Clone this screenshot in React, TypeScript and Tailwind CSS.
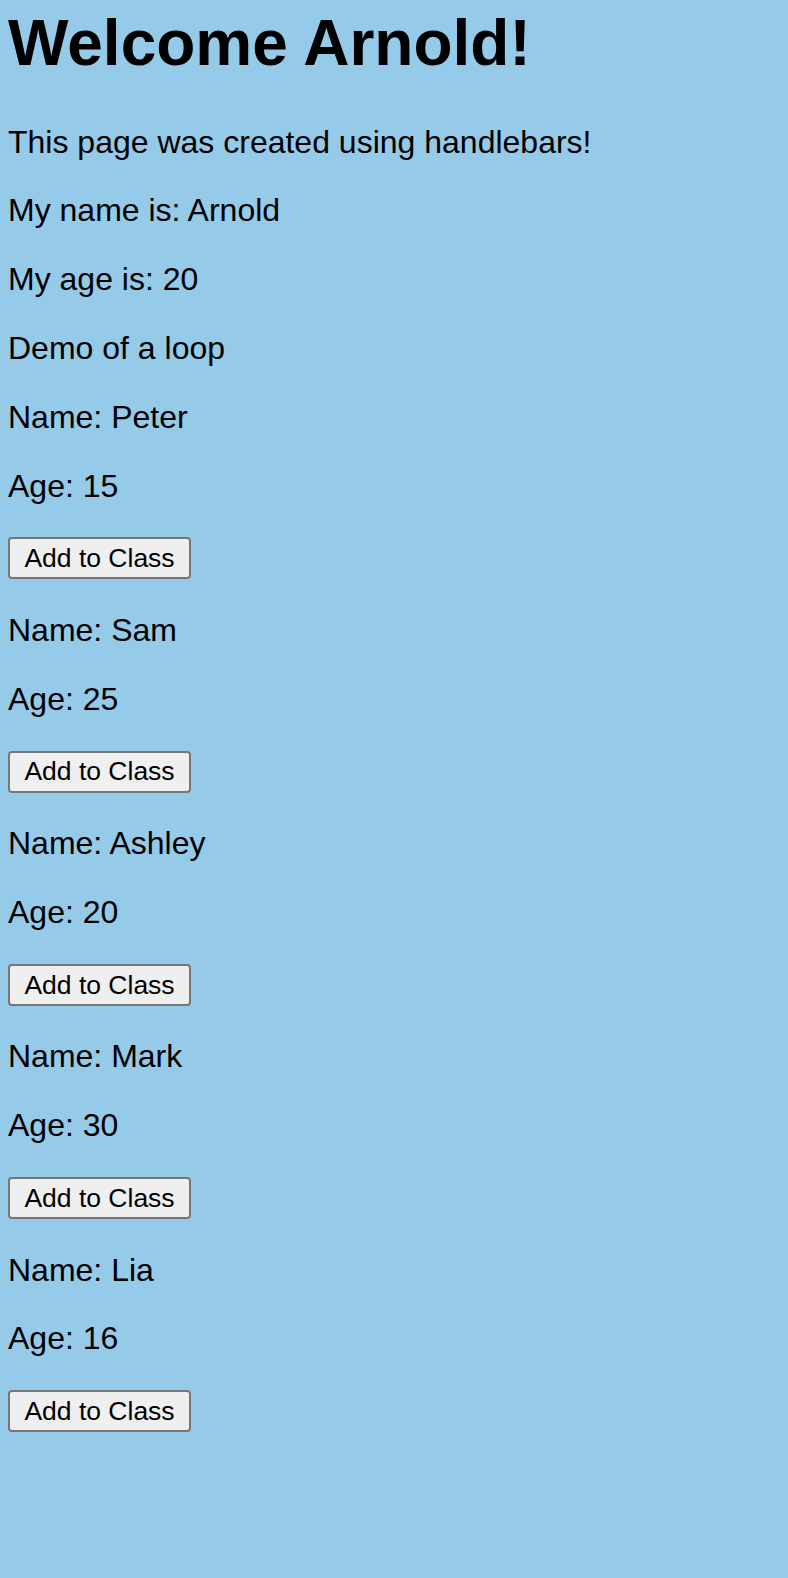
import React from "react";

const students = [
  { name: "Peter", age: 15 },
  { name: "Sam", age: 25 },
  { name: "Ashley", age: 20 },
  { name: "Mark", age: 30 },
  { name: "Lia", age: 16 },
];

const Line = ({ children }: { children: React.ReactNode }) => (
  <p className="text-[32px] leading-[1.15] mb-8">{children}</p>
);

const App: React.FC = () => {
  return (
    <div
      className="min-h-screen bg-[#95cae8] text-black px-2 pt-[7px]"
      style={{ fontFamily: '"Liberation Sans", Arial, sans-serif' }}
    >
      <h1 className="text-[64px] font-bold leading-[1.15] mb-[43px]">
        Welcome Arnold!
      </h1>
      <Line>This page was created using handlebars!</Line>
      <Line>My name is: Arnold</Line>
      <Line>My age is: 20</Line>
      <Line>Demo of a loop</Line>

      {students.map((s) => (
        <div key={s.name}>
          <Line>Name: {s.name}</Line>
          <Line>Age: {s.age}</Line>
          <div className="h-[43.6px] mb-8">
            <button className="mt-px h-[42px] w-[183px] bg-[#efefef] border-2 border-[#767676] rounded-[4px] text-[26.5px] leading-none text-black">
              Add to Class
            </button>
          </div>
        </div>
      ))}
    </div>
  );
};

export default App;
